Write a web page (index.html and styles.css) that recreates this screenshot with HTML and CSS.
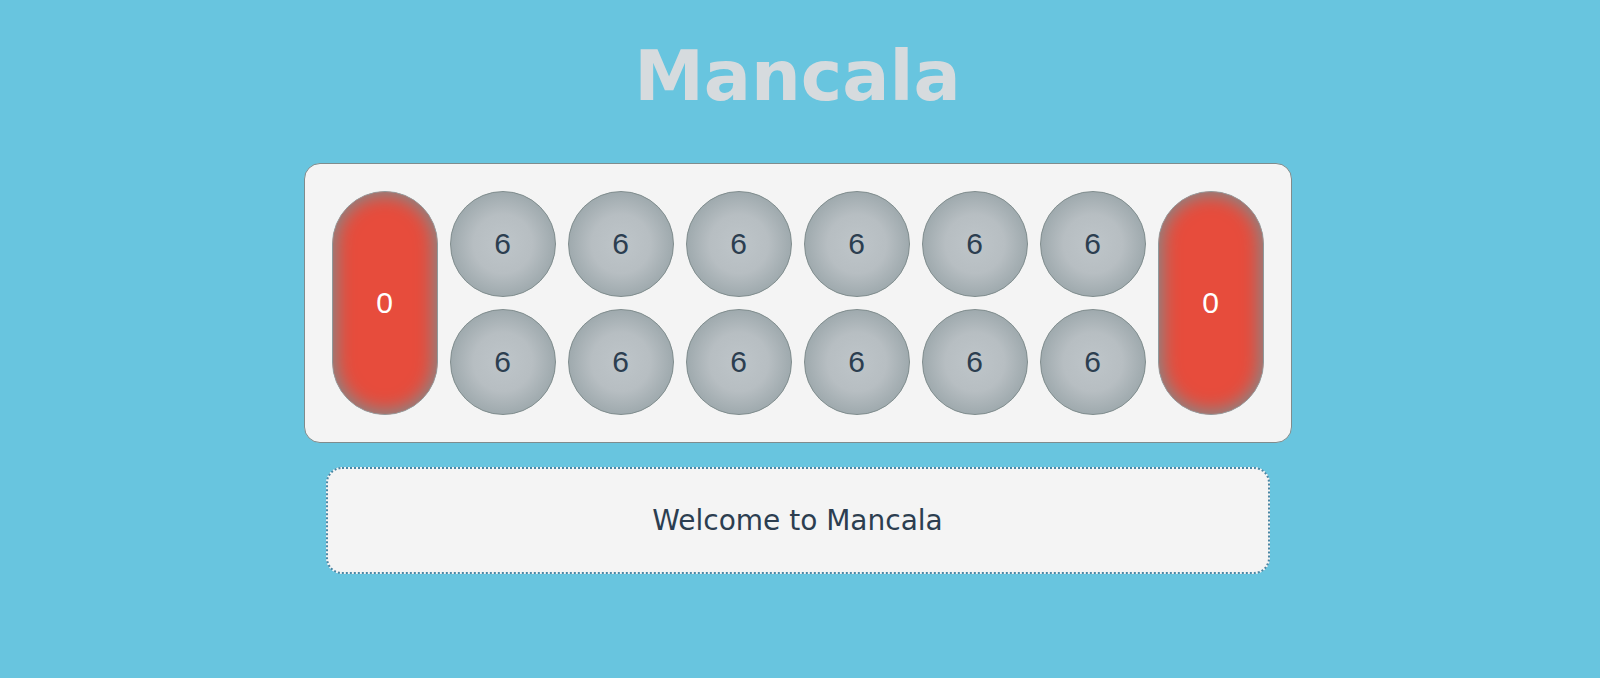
FILE: index.html
```html
<!DOCTYPE html>
<html lang="en">
<head>
<meta charset="utf-8">
<title>Mancala</title>
<link rel="stylesheet" href="styles.css">
</head>
<body>
<div class="page">
  <h1 class="title">Mancala</h1>
  <div class="board">
    <div class="store">0</div>
    <div class="pits">
      <div class="pit">6</div><div class="pit">6</div><div class="pit">6</div><div class="pit">6</div><div class="pit">6</div><div class="pit">6</div>
      <div class="pit">6</div><div class="pit">6</div><div class="pit">6</div><div class="pit">6</div><div class="pit">6</div><div class="pit">6</div>
    </div>
    <div class="store">0</div>
  </div>
  <div class="status">Welcome to Mancala</div>
</div>
</body>
</html>
```
FILE: styles.css
```css
html, body {
  margin: 0;
  padding: 0;
  background: #68c5df;
  height: 100%;
}
.page {
  padding-right: 5px;
  display: flex;
  flex-direction: column;
  align-items: center;
  font-family: "DejaVu Sans", Verdana, sans-serif;
}
.title {
  margin: 36px 0 0;
  height: 80px;
  line-height: 80px;
  font-size: 70px;
  font-weight: bold;
  color: #d6dbde;
}
.board {
  margin-top: 47px;
  display: flex;
  gap: 12px;
  padding: 27px;
  background: #f4f4f4;
  border: 1px solid #7f8c8d;
  border-radius: 16px;
}
.store {
  width: 106px;
  height: 224px;
  box-sizing: border-box;
  border-radius: 53px;
  background: #e74c3c;
  box-shadow: inset 0 0 18px 3px #7f8c8d;
  border: 1px solid #8f9a9c;
  color: #fff;
  display: flex;
  align-items: center;
  justify-content: center;
  font-family: "Liberation Sans", Arial, sans-serif;
  font-size: 30px;
}
.pits {
  display: grid;
  grid-template-columns: repeat(6, 106px);
  grid-auto-rows: 106px;
  column-gap: 12px;
  row-gap: 12px;
}
.pit {
  box-sizing: border-box;
  border-radius: 50%;
  background: radial-gradient(circle at 50% 50%, #bec5c9 0%, #b7bec2 40%, #9ea9ad 72%, #849396 100%);
  border: 1px solid #7f8c8d;
  color: #2c3e50;
  display: flex;
  align-items: center;
  justify-content: center;
  font-family: "Liberation Sans", Arial, sans-serif;
  font-size: 30px;
}
.status {
  margin-top: 24px;
  width: 944px;
  height: 107px;
  box-sizing: border-box;
  border: 2px dotted #4a87a5;
  border-radius: 16px;
  background: #f4f4f4;
  color: #2c3e50;
  font-size: 28px;
  display: flex;
  align-items: center;
  justify-content: center;
}
```
